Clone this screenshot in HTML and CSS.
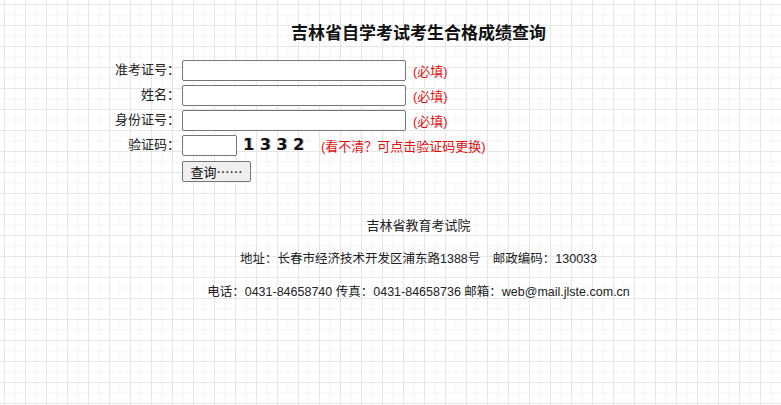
FILE: index.html
```html
<!DOCTYPE html>
<html lang="zh">
<head>
<meta charset="utf-8">
<title>吉林省自学考试考生合格成绩查询</title>
<link rel="stylesheet" href="styles.css">
</head>
<body>
<div class="page">
  <h1 class="title">吉林省自学考试考生合格成绩查询</h1>
  <form class="form">
    <label class="label">准考证号：</label>
    <div class="field"><input class="text" type="text"><span class="req">(必填)</span></div>
    <label class="label">姓名：</label>
    <div class="field"><input class="text" type="text"><span class="req">(必填)</span></div>
    <label class="label">身份证号：</label>
    <div class="field"><input class="text" type="text"><span class="req">(必填)</span></div>
    <label class="label">验证码：</label>
    <div class="field"><input class="code" type="text"><span class="captcha">1332</span><span class="req hint">(看不清？可点击验证码更换)</span></div>
    <span></span>
    <div class="field"><button class="btn" type="button">查询……</button></div>
  </form>
  <div class="footer">
    <p class="org">吉林省教育考试院</p>
    <p>地址：长春市经济技术开发区浦东路1388号　邮政编码：130033</p>
    <p>电话：0431-84658740 传真：0431-84658736 邮箱：web@mail.jlste.com.cn</p>
  </div>
</div>
</body>
</html>
```
FILE: styles.css
```css
html, body {
  margin: 0;
  padding: 0;
}
body {
  font-family: "Liberation Sans", "Noto Sans CJK SC", sans-serif;
  font-size: 13px;
  color: #222;
  background-color: #fff;
  background-image:
    linear-gradient(to right, #e6e6e6 1px, transparent 1px),
    linear-gradient(to bottom, #e6e6e6 1px, transparent 1px),
    linear-gradient(to right, #f3f3f3 1px, transparent 1px),
    linear-gradient(to bottom, #f3f3f3 1px, transparent 1px);
  background-size: 21px 21px, 21px 21px, 10.5px 10.5px, 10.5px 10.5px;
  background-position: 4px 4px, 4px 4px, 4px 4px, 4px 4px;
  min-height: 405px;
}
.page {
  margin-left: 56px;
  width: 725px;
  padding-top: 19px;
}
.title {
  margin: 0;
  text-align: center;
  font-family: "Noto Sans CJK SC", sans-serif;
  font-size: 17px;
  font-weight: bold;
  line-height: 26px;
  color: #111;
}
.form {
  display: grid;
  grid-template-columns: 124px 1fr;
  column-gap: 2px;
  row-gap: 3px;
  margin-top: 14px;
}
.label {
  text-align: right;
  line-height: 22px;
  white-space: nowrap;
}
.field {
  display: flex;
  align-items: center;
  height: 22px;
}
.text {
  box-sizing: border-box;
  width: 224px;
  height: 21px;
  border: 1px solid #767676;
  border-radius: 2px;
  padding: 1px 2px;
  margin: 0;
  background: #fff;
}
.code {
  box-sizing: border-box;
  width: 55px;
  height: 21px;
  border: 1px solid #767676;
  border-radius: 2px;
  margin: 0;
  background: #fff;
}
.req {
  color: #e01010;
  margin-left: 7px;
}
.captcha {
  font-family: "DejaVu Sans", sans-serif;
  font-weight: bold;
  font-size: 16px;
  line-height: 18px;
  letter-spacing: 5.5px;
  color: #111;
  margin-left: 6px;
  width: 70px;
  text-shadow: 1px 0 0 #bbb;
}
.hint {
  margin-left: 8px;
}
.btn {
  font-family: "Noto Sans CJK SC", sans-serif;
  font-size: 13px;
  height: 21px;
  width: 69px;
  padding: 0;
  margin: 0;
  margin-top: 3px;
  border: 1px solid #767676;
  border-radius: 2px;
  background: #efefef;
  color: #111;
  line-height: 17px;
}
.footer {
  margin-top: 35px;
  text-align: center;
  font-size: 12.5px;
}
.footer p {
  margin: 0 0 13px 0;
  line-height: 20px;
}
.footer .org {
  font-size: 13px;
}
```
